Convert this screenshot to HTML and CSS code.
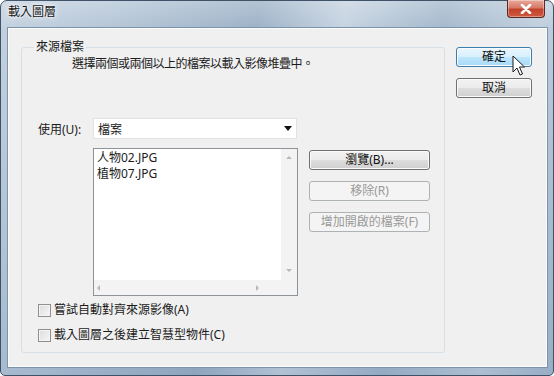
FILE: index.html
```html
<!DOCTYPE html>
<html lang="zh-Hant">
<head>
    <meta charset="UTF-8">
    <title>載入圖層</title>
    <link rel="stylesheet" href="styles.css">
</head>
<body>
    <div class="window">
        <div class="titlebar">
            <span class="title">載入圖層</span>
            <button class="close" aria-label="關閉">
                <svg width="12" height="10" viewBox="0 0 12 10">
                    <path d="M2 1 L10 9 M10 1 L2 9" stroke="#fff" stroke-width="2.6" stroke-linecap="round"/>
                </svg>
            </button>
        </div>

        <div class="client">
            <fieldset class="source">
                <legend>來源檔案</legend>
                <p class="desc">選擇兩個或兩個以上的檔案以載入影像堆疊中。</p>

                <div class="use-row">
                    <label>使用(U):</label>
                    <div class="select">
                        <span>檔案</span>
                        <span class="arrow"></span>
                    </div>
                </div>

                <div class="files-row">
                    <div class="listbox">
                        <div class="items">
                            <div>人物02.JPG</div>
                            <div>植物07.JPG</div>
                        </div>
                        <div class="vscroll">
                            <span class="tri up"></span>
                            <span class="tri down"></span>
                        </div>
                        <div class="hscroll">
                            <span class="tri left"></span>
                            <span class="tri right"></span>
                        </div>
                        <div class="corner"></div>
                    </div>
                    <div class="file-buttons">
                        <button class="btn">瀏覽(B)...</button>
                        <button class="btn" disabled>移除(R)</button>
                        <button class="btn" disabled>增加開啟的檔案(F)</button>
                    </div>
                </div>

                <label class="check"><span class="box"></span>嘗試自動對齊來源影像(A)</label>
                <label class="check"><span class="box"></span>載入圖層之後建立智慧型物件(C)</label>
            </fieldset>

            <div class="dialog-buttons">
                <button class="btn default">確定</button>
                <button class="btn">取消</button>
                <svg class="cursor" width="14" height="22" viewBox="0 0 14 22">
                    <path d="M1 1 L1 17 L5 13 L8 20 L10.5 19 L7.5 12 L12.5 12 Z" fill="#fff" stroke="#1a1a1a" stroke-width="1" stroke-linejoin="round"/>
                </svg>
            </div>
        </div>
    </div>
</body>
</html>
```

FILE: styles.css
```css
body {
    margin: 0;
    background: #fff;
    font-family: "Noto Sans", "Noto Sans CJK TC", sans-serif;
    font-size: 12px;
    color: #1b1b1b;
}

.window {
    width: 554px;
    height: 376px;
    box-sizing: border-box;
    border: 1px solid #3f5268;
    border-radius: 7px 7px 5px 5px;
    padding: 0 6px 8px 7px;
    display: flex;
    flex-direction: column;
    background:
        linear-gradient(180deg, rgba(255,255,255,0.25) 0, rgba(255,255,255,0) 30px, rgba(60,100,140,0.15) 100%),
        linear-gradient(100deg, #c3d1df 0%, #b4c5d7 18%, #9bb0c6 42%, #c4d2e0 56%, #a3b7cc 72%, #bfcedd 88%, #a8bbcf 100%);
}

.titlebar {
    height: 27px;
    display: flex;
    align-items: flex-start;
}

.title {
    padding-top: 3px;
    line-height: 16px;
    color: #151515;
    text-shadow: 0 0 6px #fff, 0 0 3px #fff;
}

.close {
    margin: -1px 2px 0 auto;
    width: 38px;
    height: 18px;
    padding: 0;
    border: 1px solid #5b2a22;
    border-top: none;
    border-radius: 0 0 4px 4px;
    background: linear-gradient(180deg, #e9a99c 0%, #d77a66 45%, #c2412b 55%, #cf5a3f 100%);
    box-shadow: inset 0 0 0 1px rgba(255,255,255,0.35);
    display: flex;
    align-items: center;
    justify-content: center;
}

.client {
    flex: 1;
    background: #f0f0f0;
    border: 1px solid #fafbfc;
    outline: 1px solid #7c93aa;
    display: flex;
    align-items: flex-start;
    padding: 10px 0 0 12px;
}

.source {
    margin: 0;
    width: 424px;
    height: 314px;
    box-sizing: border-box;
    border: 1px solid #d5dfe5;
    border-radius: 3px;
    padding: 0 0 0 16px;
}

.source legend {
    margin-left: -4px;
    padding: 0 2px;
    line-height: 16px;
}

.desc {
    margin: 1px 0 0 34px;
    line-height: 16px;
    letter-spacing: -0.5px;
}

.use-row {
    margin-top: 46px;
    display: flex;
    align-items: center;
    height: 21px;
}

.use-row label {
    width: 55px;
}

.select {
    width: 204px;
    height: 21px;
    box-sizing: border-box;
    background: #fff;
    border: 1px solid #e2e2e2;
    display: flex;
    align-items: center;
    justify-content: space-between;
    padding: 0 4px 0 4px;
}

.arrow {
    width: 0;
    height: 0;
    border-left: 4px solid transparent;
    border-right: 4px solid transparent;
    border-top: 5px solid #111;
}

.files-row {
    margin-top: 9px;
    margin-left: 55px;
    display: flex;
    align-items: flex-start;
    gap: 11px;
}

.listbox {
    width: 205px;
    height: 148px;
    box-sizing: border-box;
    border: 1px solid #8e9299;
    background: #fff;
    display: grid;
    grid-template-columns: 1fr 16px;
    grid-template-rows: 1fr 15px;
}

.items {
    padding: 1px 0 0 3px;
    line-height: 16px;
}

.vscroll,
.hscroll,
.corner {
    background: #f3f3f3;
}

.vscroll {
    display: flex;
    flex-direction: column;
    justify-content: space-between;
    align-items: center;
    padding: 7px 0 8px;
}

.hscroll {
    display: flex;
    justify-content: space-between;
    align-items: center;
    padding: 0 22px 0 3px;
}

.tri {
    width: 0;
    height: 0;
}

.tri.up {
    border-left: 3px solid transparent;
    border-right: 3px solid transparent;
    border-bottom: 3px solid #b9b9b9;
}

.tri.down {
    border-left: 3px solid transparent;
    border-right: 3px solid transparent;
    border-top: 3px solid #b9b9b9;
}

.tri.left {
    border-top: 3px solid transparent;
    border-bottom: 3px solid transparent;
    border-right: 3px solid #b9b9b9;
}

.tri.right {
    border-top: 3px solid transparent;
    border-bottom: 3px solid transparent;
    border-left: 3px solid #b9b9b9;
}

.file-buttons {
    margin-top: 2px;
    display: flex;
    flex-direction: column;
    gap: 11px;
}

.file-buttons .btn {
    width: 121px;
}

.btn {
    height: 20px;
    box-sizing: border-box;
    padding: 0;
    font-family: inherit;
    font-size: 12px;
    line-height: 16px;
    color: #111;
    border: 1px solid #707070;
    border-radius: 3px;
    background: linear-gradient(180deg, #f2f2f2 0%, #ebebeb 48%, #dddddd 52%, #cfcfcf 100%);
    box-shadow: inset 0 0 0 1px #fbfbfb;
}

.btn.default {
    border-color: #3c7fb1;
    background: linear-gradient(180deg, #eaf6fd 0%, #d9f0fc 48%, #bee6fd 52%, #a7d9f5 100%);
}

.btn:disabled {
    color: #9a9a9a;
    border-color: #adb2b5;
    background: #f4f4f4;
    box-shadow: none;
}

.check {
    display: flex;
    align-items: center;
    gap: 3px;
    line-height: 16px;
}

.check:first-of-type {
    margin-top: 6px;
}

.check + .check {
    margin-top: 9px;
}

.box {
    width: 13px;
    height: 13px;
    box-sizing: border-box;
    border: 1px solid #8f8f8f;
    background: linear-gradient(135deg, #dcdcdc, #f6f6f6);
    box-shadow: inset 0 0 0 1px #f4f4f4;
}

.dialog-buttons {
    position: relative;
    margin: 8px 0 0 11px;
    display: flex;
    flex-direction: column;
    gap: 11px;
}

.dialog-buttons .btn {
    width: 76px;
}

.cursor {
    position: absolute;
    left: 56px;
    top: 8px;
}
```
